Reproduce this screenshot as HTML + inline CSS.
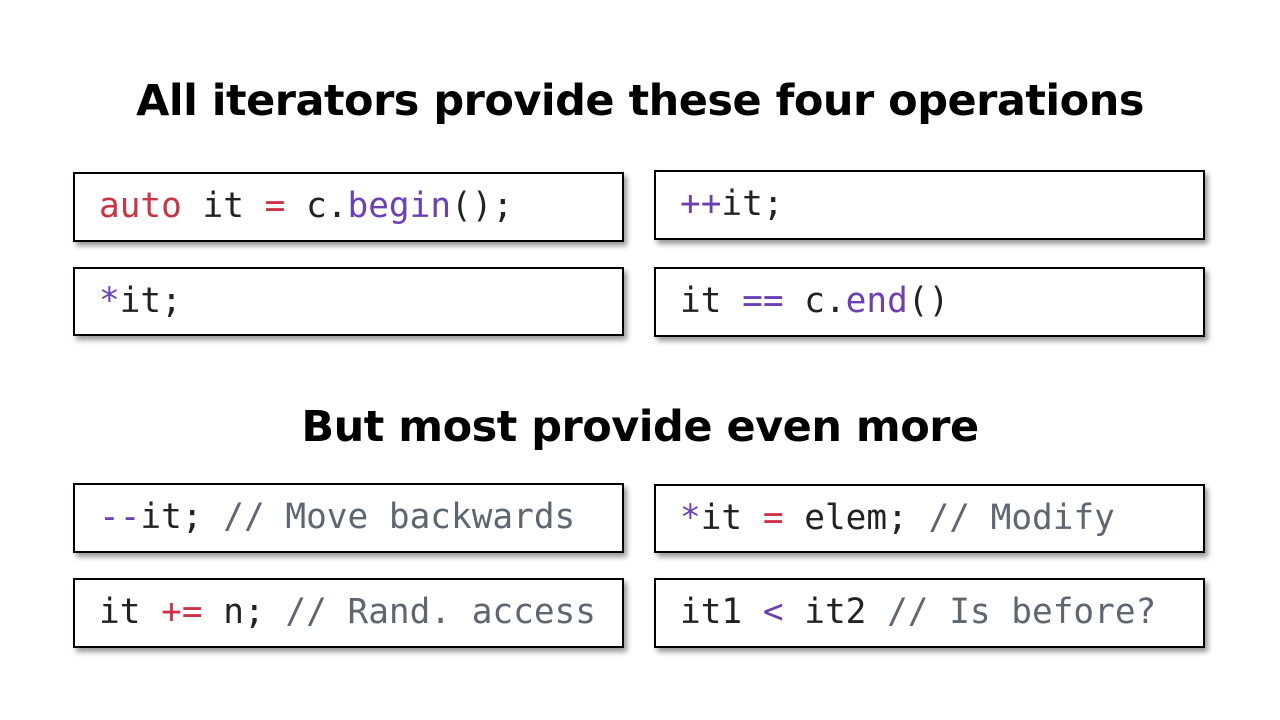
<!DOCTYPE html>
<html><head><style>
body{margin:0;width:1280px;height:720px;background:#fff;position:relative;overflow:hidden;font-family:"DejaVu Sans","Liberation Sans",sans-serif;}
h1{position:absolute;left:0;width:1280px;text-align:center;margin:0;font-size:43px;font-weight:bold;color:#000;letter-spacing:-0.5px;}
.b{position:absolute;width:548px;height:67px;border:2px solid #000;box-sizing:border-box;box-shadow:3px 4px 5px rgba(0,0,0,0.4);font-family:"DejaVu Sans Mono","Liberation Mono",monospace;font-size:34.4px;line-height:64px;padding-left:24px;color:#222;white-space:pre;background:#fff;}
.r{color:#cc3344}.p{color:#6a3fb8}.c{color:#5e6670}
</style></head><body>
<h1 style="top:76px">All iterators provide these four operations</h1>
<div class="b" style="left:73px;top:172px;width:551px;height:70px"><span class="r">auto</span> it <span class="r">=</span> c.<span class="p">begin</span>();</div>
<div class="b" style="left:654px;top:170px;width:551px;height:70px"><span class="p">++</span>it;</div>
<div class="b" style="left:73px;top:267px;width:551px;height:69px"><span class="p">*</span>it;</div>
<div class="b" style="left:654px;top:267px;width:551px;height:70px">it <span class="p">==</span> c.<span class="p">end</span>()</div>
<h1 style="top:402px">But most provide even more</h1>
<div class="b" style="left:73px;top:483px;width:551px;height:70px"><span class="p">--</span>it; <span class="c">// Move backwards</span></div>
<div class="b" style="left:654px;top:484px;width:551px;height:69px"><span class="p">*</span>it <span class="r">=</span> elem; <span class="c">// Modify</span></div>
<div class="b" style="left:73px;top:578px;width:551px;height:70px">it <span class="r">+=</span> n; <span class="c">// Rand. access</span></div>
<div class="b" style="left:654px;top:578px;width:551px;height:70px">it1 <span class="p">&lt;</span> it2 <span class="c">// Is before?</span></div>
</body></html>
